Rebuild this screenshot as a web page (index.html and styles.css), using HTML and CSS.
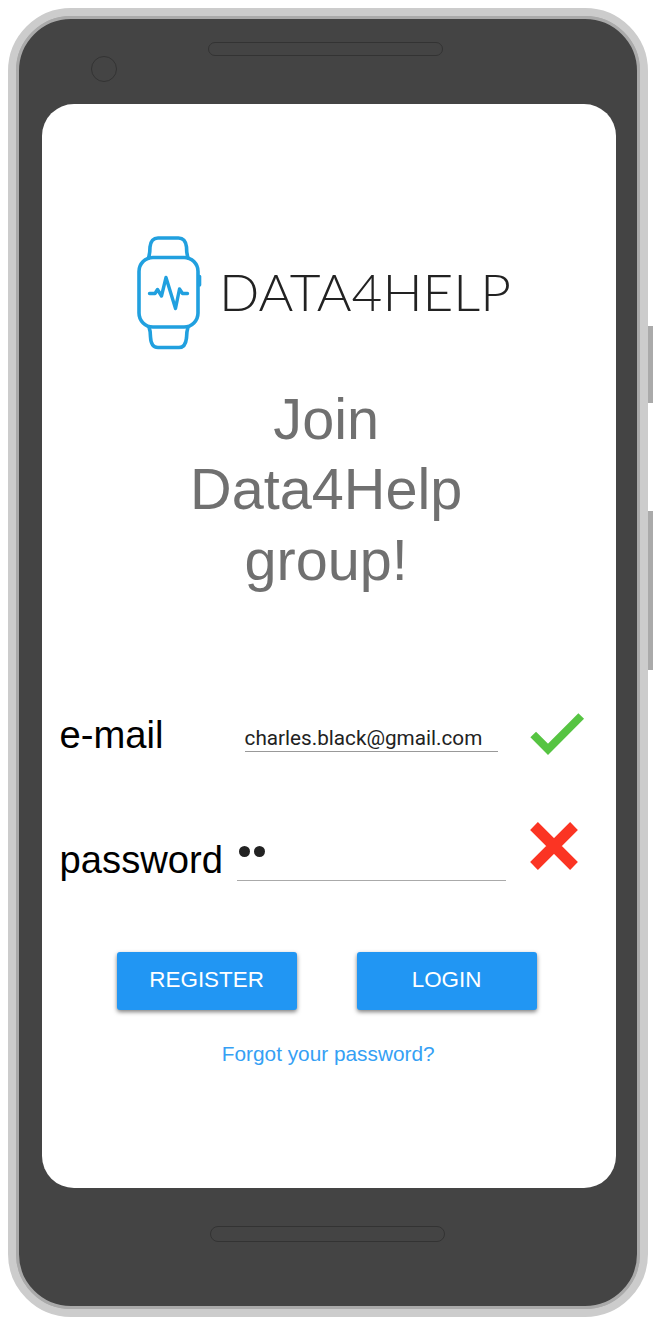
FILE: index.html
```html
<!DOCTYPE html>
<html lang="en">
<head>
<meta charset="utf-8">
<title>Data4Help</title>
<link rel="stylesheet" href="styles.css">
</head>
<body>
<div class="device">
  <div class="side-button power"></div>
  <div class="side-button volume"></div>
  <div class="bezel">
    <div class="bezel-top">
      <span class="camera"></span>
      <span class="speaker"></span>
    </div>
    <main class="screen">
      <div class="brand">
        <svg class="watch" width="66" height="116" viewBox="0 0 66 116" fill="none" stroke="#21a0df" stroke-width="3.6" stroke-linejoin="round" stroke-linecap="round">
          <path d="M12.500 23Q14 18 14 12Q15 3 22 3H42.500Q49.500 3 50.500 12Q50.500 18 52 23"/>
          <path d="M13 92Q14.500 96 14.500 102Q15 112.500 22 112.500H43Q49.500 112.500 50.500 103Q50.500 97 52 92"/>
          <rect x="3" y="22.500" width="59" height="69.500" rx="14"/>
          <path d="M63.500 41.500V50"/>
          <path d="M13.500 58.500H19L21.500 54.500 25.500 61 30 42.500 39.500 73.500 43.500 54 46.500 58.500H51.500" stroke-width="3.400"/>
        </svg>
        <svg class="wordmark" width="300" height="72" viewBox="0 0 300 72">
          <text x="0" y="54" textLength="292" lengthAdjust="spacingAndGlyphs">DATA4HELP</text>
        </svg>
      </div>
      <h1 class="title">Join<br>Data4Help<br>group!</h1>
      <div class="row email-row">
        <label class="label">e-mail</label>
        <div class="field email">charles.black@gmail.com</div>
        <svg class="status" width="56" height="50" viewBox="0 0 56 50">
          <path d="M3.200 23.500 18 38.300 51.200 5" fill="none" stroke="#56c442" stroke-width="8"/>
        </svg>
      </div>
      <div class="row password-row">
        <label class="label">password</label>
        <div class="field secret"><span class="dot"></span><span class="dot"></span></div>
        <svg class="status" width="56" height="50" viewBox="0 0 56 50">
          <path d="M4 5 44 45M44 5 4 45" fill="none" stroke="#fb3423" stroke-width="11"/>
        </svg>
      </div>
      <div class="actions">
        <div class="button">REGISTER</div>
        <div class="button">LOGIN</div>
      </div>
      <div class="forgot">Forgot your password?</div>
    </main>
    <div class="bezel-bottom"><span class="speaker low"></span></div>
  </div>
</div>
</body>
</html>
```
FILE: styles.css
```css
* { box-sizing: border-box; }
body {
  margin: 0;
  padding: 8px;
  background: #fff;
  font-family: "Liberation Sans", Arial, sans-serif;
}
.device {
  position: relative;
  width: 640px;
  height: 1308.5px;
  border: 8px solid #ccc;
  border-radius: 63px;
  background: #aaa;
}
.side-button {
  position: absolute;
  left: 632px;
  width: 5px;
  background: #aaa;
}
.power { top: 310px; height: 77px; }
.volume { top: 495px; height: 158.5px; }
.bezel {
  height: 100%;
  border: 3.3px solid #aaa;
  border-radius: 55px;
  background: #444;
  padding: 0 22.6px;
}
.bezel-top {
  height: 84.7px;
  display: flex;
  align-items: flex-start;
}
.camera {
  width: 26px;
  height: 26px;
  margin: 37px 0 0 49.5px;
  border: 1.5px solid #333;
  border-radius: 50%;
}
.speaker {
  width: 235px;
  height: 14px;
  margin: 22.5px 0 0 91px;
  border: 1.5px solid #333;
  border-radius: 8px;
}
.speaker.low {
  height: 16px;
  margin: 37.5px 0 0 168px;
}
.bezel-bottom { display: flex; }
.screen {
  width: 574.2px;
  height: 1084.5px;
  border-radius: 32px;
  background: #fff;
  padding-top: 131px;
}
.brand {
  display: flex;
  align-items: flex-start;
  height: 116px;
  padding-left: 94px;
}
.wordmark { margin: 22px 0 0 17.5px; }
.wordmark text {
  font: 300 52px Lato, sans-serif;
  fill: #222;
}
.title {
  margin: 33px 5px 0 0;
  font-weight: 400;
  font-size: 57.6px;
  line-height: 70.5px;
  text-align: center;
  color: #707070;
}
.row {
  display: flex;
  align-items: flex-start;
  padding-left: 18px;
}
.email-row { margin-top: 116px; height: 110px; }
.password-row { height: 131px; }
.label {
  font-size: 38.2px;
  line-height: 44px;
  color: #000;
}
.field { color: #222; }
.email-row .label { width: 185px; padding-top: 2px; }
.email {
  width: 253px;
  height: 41px;
  border-bottom: 1.5px solid #999;
  padding-top: 15px;
  font: 20.7px/24px Roboto, sans-serif;
}
.email-row .status { margin-left: 32px; }
.password-row .label { width: 177px; padding-top: 17px; }
.secret {
  width: 269px;
  height: 60px;
  border-bottom: 1.5px solid #aaa;
  display: flex;
  gap: 4px;
  padding: 25px 0 0 2px;
}
.dot {
  width: 11px;
  height: 11px;
  border-radius: 50%;
  background: #222;
}
.password-row .status { margin-left: 24px; }
.actions {
  display: flex;
  gap: 60px;
  padding-left: 75px;
}
.button {
  width: 180px;
  height: 58px;
  border-radius: 3px;
  background: #2196f3;
  box-shadow: 0 2px 4px rgba(0, 0, 0, .5);
  color: #fff;
  font-size: 22.4px;
  line-height: 56px;
  text-align: center;
}
.forgot {
  margin: 32px 1px 0 0;
  font-size: 20.8px;
  line-height: 24px;
  text-align: center;
  color: #35a0f4;
}
```
